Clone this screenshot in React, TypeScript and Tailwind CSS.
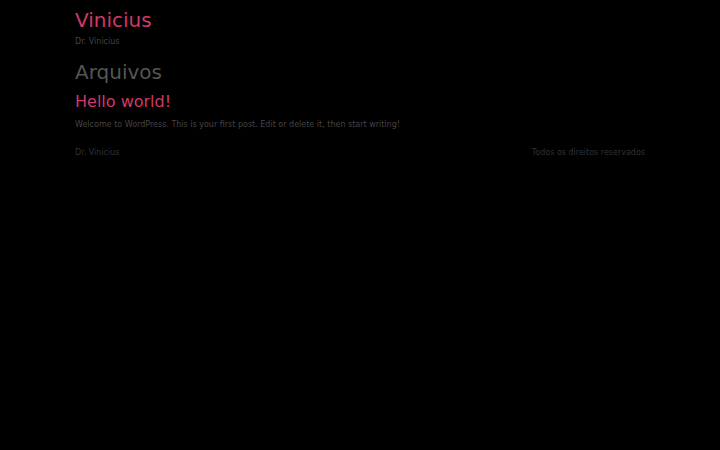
export default function App() {
  return (
    <div className="min-h-[450px] bg-black" style={{ fontFamily: '"DejaVu Sans", sans-serif' }}>
      <div className="mx-auto w-[570px] pt-[7px]">
        <header className="flex flex-col">
          <a className="text-[20px] leading-[26px] text-[#d0386a]">Vinicius</a>
          <span className="mt-[3px] text-[8px] leading-[12px] text-[#444]">Dr. Vinicius</span>
        </header>
        <main className="mt-[11px] flex flex-col">
          <h1 className="text-[20px] leading-[26px] text-[#555]">Arquivos</h1>
          <h2 className="mt-[6px] text-[16px] leading-[22px] text-[#d0386a]">Hello world!</h2>
          <p className="mt-[6px] text-[8px] leading-[12px] text-[#444]">
            Welcome to WordPress. This is your first post. Edit or delete it, then start writing!
          </p>
        </main>
        <footer className="mt-[16px] flex justify-between text-[8px] leading-[12px] text-[#333]">
          <span>Dr. Vinicius</span>
          <span>Todos os direitos reservados</span>
        </footer>
      </div>
    </div>
  );
}
